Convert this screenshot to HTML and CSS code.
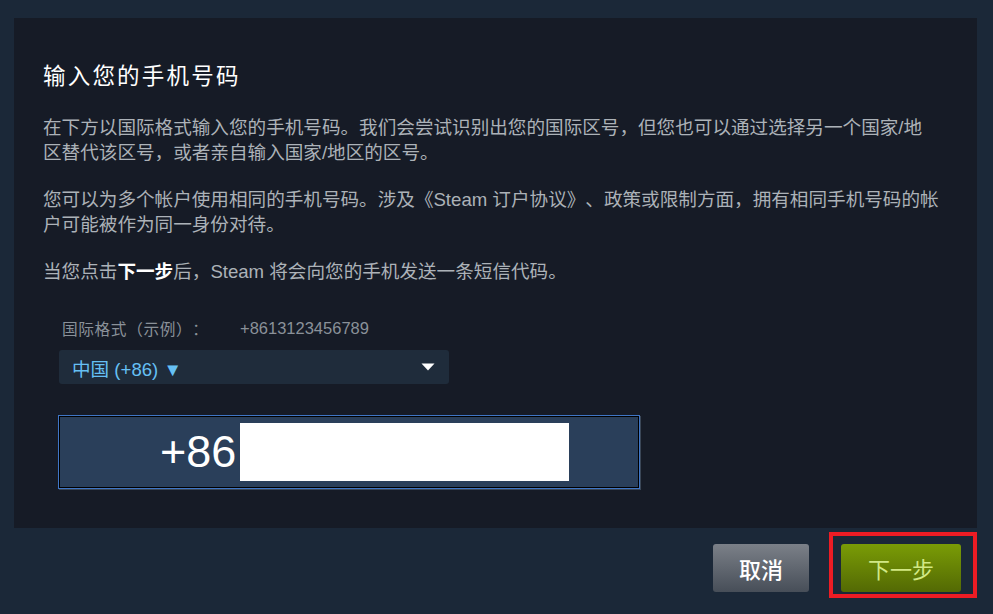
FILE: index.html
```html
<!DOCTYPE html>
<html lang="zh-CN">
<head>
<meta charset="utf-8">
<title>输入您的手机号码</title>
<link rel="stylesheet" href="styles.css">
</head>
<body>
<div class="page">
  <div class="panel">
    <h1 class="title">输入您的手机号码</h1>
    <p class="para">在下方以国际格式输入您的手机号码。我们会尝试识别出您的国际区号，但您也可以通过选择另一个国家/地区替代该区号，或者亲自输入国家/地区的区号。</p>
    <p class="para">您可以为多个帐户使用相同的手机号码。涉及《Steam 订户协议》、政策或限制方面，拥有相同手机号码的帐户可能被作为同一身份对待。</p>
    <p class="para">当您点击<b class="strong">下一步</b>后，Steam 将会向您的手机发送一条短信代码。</p>
    <div class="form">
      <div class="example">
        <span class="example-label">国际格式（示例）：</span>
        <span class="example-value">+8613123456789</span>
      </div>
      <div class="select">
        <span class="select-text">中国 (+86) ▼</span>
        <svg class="caret" width="14" height="8" viewBox="0 0 14 8"><polygon points="0.5,0.5 13.5,0.5 7,7.5" fill="#ffffff"/></svg>
      </div>
      <div class="phone">
        <div class="phone-inner">
          <span class="prefix">+86</span>
          <span class="redact"></span>
        </div>
      </div>
    </div>
  </div>
  <div class="actions">
    <button class="btn btn-grey">取消</button>
    <div class="highlight">
      <button class="btn btn-green">下一步</button>
    </div>
  </div>
</div>
</body>
</html>
```

FILE: styles.css
```css
* { box-sizing: border-box; }
html, body {
  margin: 0;
  padding: 0;
  background: #1b2838;
}
body {
  font-family: "Liberation Sans", "Noto Sans CJK SC", sans-serif;
  color: #acb2b8;
  width: 993px;
  height: 614px;
  overflow: hidden;
  text-spacing-trim: space-all;
}
.page {
  display: flex;
  flex-direction: column;
}
.panel {
  margin: 18px 16px 0 14px;
  height: 510px;
  background: #161b26;
  padding: 44px 29px 0 29px;
}
.title {
  margin: 0;
  font-size: 22.5px;
  line-height: 30px;
  font-weight: normal;
  letter-spacing: 2.2px;
  color: #ffffff;
}
.para {
  margin: 23px 0 0 0;
  max-width: 896px;
  font-size: 18.6px;
  line-height: 25px;
}
.para + .para { margin-top: 22px; }
.strong { color: #ffffff; font-weight: bold; }
.form {
  padding-left: 16px;
  margin-top: 34px;
}
.example {
  display: flex;
  align-items: center;
  height: 20px;
  padding-left: 3px;
  color: #8a9199;
}
.example-label { font-size: 15.7px; width: 178px; letter-spacing: 0.6px; }
.example-value { font-size: 16.5px; }
.select {
  margin-top: 12px;
  width: 390px;
  height: 34px;
  background: #1f2c3b;
  border-radius: 3px;
  display: flex;
  align-items: center;
  justify-content: space-between;
  padding: 0 14px 0 13px;
}
.select-text {
  color: #66c0f4;
  font-size: 18.6px;
}
.caret { display: block; }
.phone {
  margin-top: 31px;
  margin-left: -1px;
  width: 582px;
  height: 74px;
  border: 1px solid #3f76c6;
  box-shadow: 1px 1px 0 #3a4656;
}
.phone-inner {
  height: 100%;
  border: 1px solid #000000;
  background: #2a3f5a;
  display: flex;
  align-items: center;
  padding: 0 0 0 100px;
}
.prefix {
  font-size: 45px;
  line-height: 58px;
  color: #ffffff;
  margin-right: 4px;
}
.redact {
  width: 329px;
  height: 58px;
  background: #ffffff;
}
.actions {
  display: flex;
  justify-content: flex-end;
  align-items: flex-start;
  padding: 4px 16px 16px 0;
  gap: 20px;
}
.btn {
  border: none;
  border-radius: 3px;
  height: 48px;
  font-family: "Liberation Sans", "Noto Sans CJK SC", sans-serif;
  font-size: 22px;
  padding: 0;
  cursor: pointer;
}
.btn-grey {
  margin-top: 12px;
  width: 96px;
  color: #ffffff;
  font-weight: 500;
  background: linear-gradient(to bottom, #7b8088 0%, #474e58 100%);
}
.highlight {
  border: 4px solid #ed1c24;
  padding: 8px 12px 2px 8px;
}
.btn-green {
  display: block;
  width: 120px;
  color: #d2e885;
  background: linear-gradient(to bottom, #7a9c06 0%, #536904 100%);
}
```
